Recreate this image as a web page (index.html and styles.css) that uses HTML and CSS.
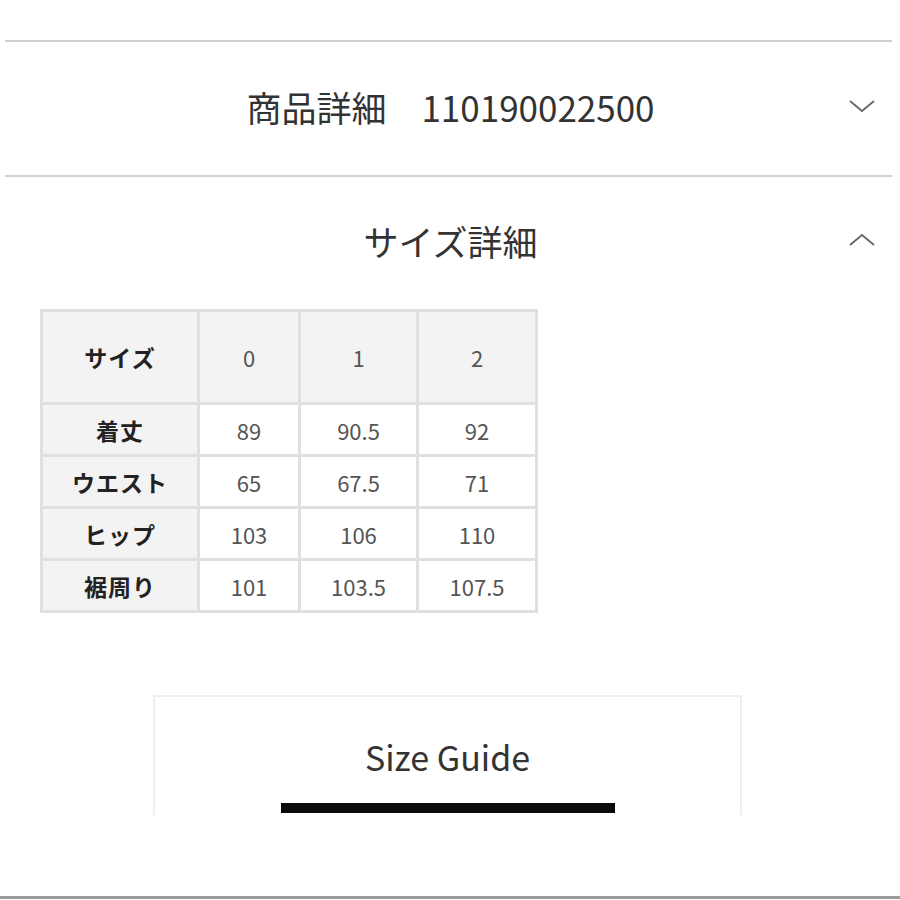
FILE: index.html
```html
<!DOCTYPE html>
<html lang="ja">
<head>
<meta charset="utf-8">
<title>サイズ詳細</title>
<link rel="stylesheet" href="styles.css">
</head>
<body>
<div class="page">
  <div class="rule"></div>
  <div class="acc-head acc-head--first">
    <span class="acc-spacer"></span>
    <h2 class="acc-title">商品詳細　110190022500</h2>
    <svg class="chev" width="28" height="16" viewBox="0 0 28 16"><polyline points="2,3 14,13 26,3" fill="none" stroke="#666" stroke-width="1.8"/></svg>
  </div>
  <div class="rule"></div>
  <div class="acc-head acc-head--second">
    <span class="acc-spacer"></span>
    <h2 class="acc-title">サイズ詳細</h2>
    <svg class="chev" width="28" height="16" viewBox="0 0 28 16"><polyline points="2,13 14,3 26,13" fill="none" stroke="#666" stroke-width="1.8"/></svg>
  </div>

  <table class="size-table">
    <colgroup>
      <col class="c-label"><col class="c-0"><col class="c-1"><col class="c-2">
    </colgroup>
    <tr class="head-row">
      <th>サイズ</th><th class="num">0</th><th class="num">1</th><th class="num">2</th>
    </tr>
    <tr><th>着丈</th><td>89</td><td>90.5</td><td>92</td></tr>
    <tr><th>ウエスト</th><td>65</td><td>67.5</td><td>71</td></tr>
    <tr><th>ヒップ</th><td>103</td><td>106</td><td>110</td></tr>
    <tr><th>裾周り</th><td>101</td><td>103.5</td><td>107.5</td></tr>
  </table>

  <div class="guide">
    <div class="guide-text">Size Guide</div>
    <div class="guide-bar"></div>
  </div>
</div>
<div class="bottom-rule"></div>
</body>
</html>
```

FILE: styles.css
```css
html, body {
  margin: 0;
  padding: 0;
  background: #ffffff;
}
body {
  font-family: "Noto Sans CJK JP", "Noto Sans", sans-serif;
  color: #333;
  width: 900px;
  height: 900px;
  overflow: hidden;
  position: relative;
}
.page {
  padding: 40px 8px 0 5px;
}
.rule {
  height: 2px;
  background: #d0d0d0;
}
.acc-head {
  display: grid;
  grid-template-columns: 1fr auto 1fr;
  align-items: center;
}
.acc-head--first {
  height: 133px;
}
.acc-head--second {
  height: 132px;
}
.acc-title {
  margin: 0;
  font-weight: 400;
  font-size: 35px;
  line-height: 48px;
  color: #333;
  letter-spacing: 0;
  padding-left: 4px;
  margin-top: -4px;
}
.chev {
  justify-self: end;
  margin-right: 16px;
  margin-top: -6px;
}

.size-table {
  margin-left: 35px;
  border-collapse: separate;
  border-spacing: 3px;
  background: #e0e0e0;
  font-size: 22px;
}
.c-label { width: 154px; }
.c-0 { width: 98px; }
.c-1 { width: 115px; }
.c-2 { width: 116px; }
.size-table th,
.size-table td {
  padding: 0;
  text-align: center;
  height: 49px;
  line-height: 30px;
}
.size-table th {
  background: #f3f3f3;
  color: #222;
  font-weight: 700;
  font-size: 23px;
  letter-spacing: 1px;
}
.size-table td {
  background: #ffffff;
  color: #555;
  font-weight: 400;
}
.size-table .head-row th {
  height: 90px;
}
.size-table .head-row th.num {
  font-weight: 400;
  font-size: 22px;
  color: #555;
  letter-spacing: 0;
}

.guide {
  margin: 82px 0 0 148px;
  width: 585px;
  height: 118px;
  border: 2px solid #efefef;
  border-bottom: none;
  display: flex;
  flex-direction: column;
  align-items: center;
}
.guide-text {
  margin-top: 36px;
  font-size: 34px;
  line-height: 48px;
  color: #333;
}
.guide-bar {
  margin-top: 22px;
  width: 334px;
  height: 10px;
  background: #0a0a0a;
}
.bottom-rule {
  position: absolute;
  left: 0;
  right: 0;
  top: 896px;
  height: 3px;
  background: #9a9a9a;
}
```
